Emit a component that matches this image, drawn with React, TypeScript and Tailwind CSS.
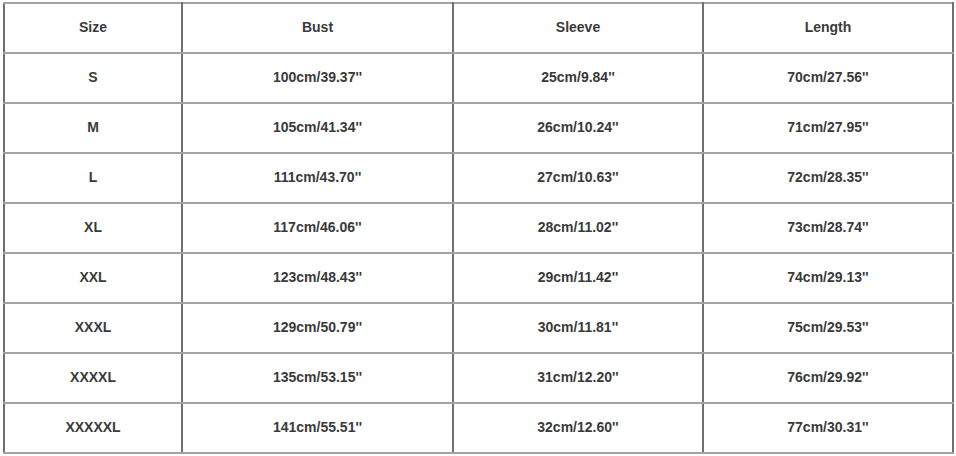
import React from "react";

const rows: string[][] = [
  ["Size", "Bust", "Sleeve", "Length"],
  ["S", "100cm/39.37''", "25cm/9.84''", "70cm/27.56''"],
  ["M", "105cm/41.34''", "26cm/10.24''", "71cm/27.95''"],
  ["L", "111cm/43.70''", "27cm/10.63''", "72cm/28.35''"],
  ["XL", "117cm/46.06''", "28cm/11.02''", "73cm/28.74''"],
  ["XXL", "123cm/48.43''", "29cm/11.42''", "74cm/29.13''"],
  ["XXXL", "129cm/50.79''", "30cm/11.81''", "75cm/29.53''"],
  ["XXXXL", "135cm/53.15''", "31cm/12.20''", "76cm/29.92''"],
  ["XXXXXL", "141cm/55.51''", "32cm/12.60''", "77cm/30.31''"],
];

export default function App() {
  return (
    <div className="w-[956px] h-[456px] bg-white pt-[2px] pl-[3px] overflow-hidden">
      <table
        className="table-fixed border-collapse w-[949px] text-[14px] font-bold text-[#3a3a3a]"
        style={{ fontFamily: '"Liberation Sans", Arial, sans-serif' }}
      >
        <colgroup>
          <col className="w-[178px]" />
          <col className="w-[271px]" />
          <col className="w-[250px]" />
          <col className="w-[250px]" />
        </colgroup>
        <tbody>
          {rows.map((r, i) => (
            <tr key={i} className="h-[50px]">
              {r.map((c, j) => (
                <td
                  key={j}
                  className="border-2 border-y-[#a3a3a3] border-x-[#707070] text-center align-middle p-0 pb-[3px] leading-none"
                >
                  {c}
                </td>
              ))}
            </tr>
          ))}
        </tbody>
      </table>
    </div>
  );
}
